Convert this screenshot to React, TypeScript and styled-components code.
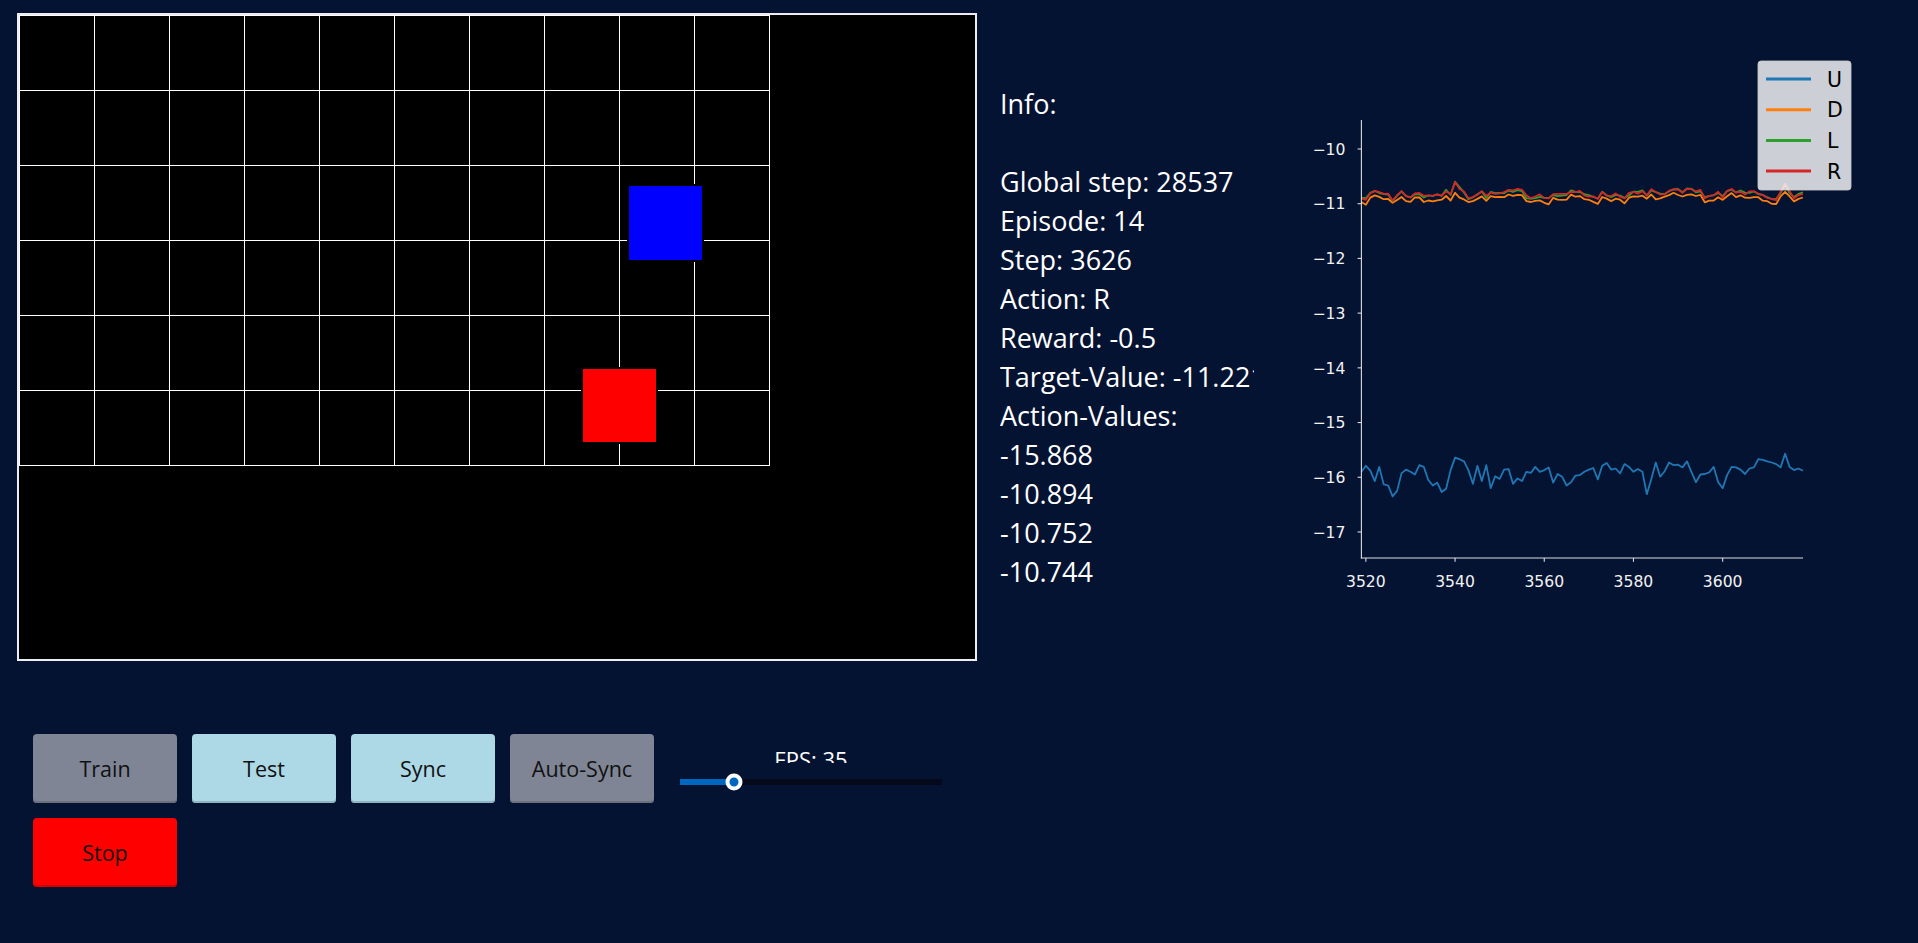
import React from 'react';
import styled, { createGlobalStyle } from 'styled-components';

const GlobalStyle = createGlobalStyle`
  html, body {
    margin: 0;
    padding: 0;
    background: #051332;
  }
  body {
    font-family: "Open Sans", "Noto Sans", sans-serif;
    color: #fff;
  }
`;

const Page = styled.div`
  min-height: 943px;
  padding: 13px 0 0 17px;
  box-sizing: border-box;
`;

const TopRow = styled.div`
  display: flex;
  align-items: flex-start;
`;

const BoardFrame = styled.div`
  flex-shrink: 0;
  width: 956px;
  height: 644px;
  border: 2px solid #eeeef2;
  background: #000;
  svg {
    display: block;
  }
`;

const InfoPanel = styled.div`
  flex-shrink: 0;
  width: 254px;
  margin: 71px 0 0 23px;
  overflow: hidden;
  white-space: pre;
  font-size: 27px;
  line-height: 39px;
`;

const InfoLine = styled.div`
  height: 39px;
`;

const ChartBox = styled.div`
  flex-shrink: 0;
  margin: 27px 0 0 6px;
  svg {
    display: block;
  }
`;

const Controls = styled.div`
  display: flex;
  flex-wrap: wrap;
  gap: 15px;
  width: 940px;
  margin: 73px 0 0 16px;
`;

const tones = {
  gray: { bg: '#7f8594', edge: '#6b707d' },
  blue: { bg: '#add8e6', edge: '#8fb3bf' },
  red: { bg: '#ff0000', edge: '#d40000' },
};

const Button = styled.button<{ $tone: keyof typeof tones }>`
  width: 144px;
  height: 69px;
  border: 0;
  border-radius: 4px;
  background: ${(p) => tones[p.$tone].bg};
  box-shadow: inset 0 -2px 0 ${(p) => tones[p.$tone].edge};
  color: #111;
  font-family: "Open Sans", "Noto Sans", sans-serif;
  font-size: 21.5px;
  padding: 0;
  cursor: pointer;
`;

const SliderBox = styled.div`
  width: 284px;
  padding: 0 11px;
  box-sizing: border-box;
  display: flex;
  flex-direction: column;
`;

const SliderLabel = styled.div`
  height: 14.5px;
  margin-top: 14.5px;
  overflow: hidden;
  text-align: center;
  font-size: 22px;
  line-height: 21px;
  color: #fff;
`;

const Track = styled.div`
  position: relative;
  height: 6px;
  margin-top: 16px;
  background: #040a1b;
`;

const Fill = styled.div`
  height: 100%;
  background: #0067c0;
`;

const Thumb = styled.div`
  position: absolute;
  top: 50%;
  width: 17px;
  height: 17px;
  box-sizing: border-box;
  border-radius: 50%;
  border: 4px solid #fff;
  background: #0067c0;
  transform: translate(-50%, -50%);
`;

const CELL = 75;

const Board = () => {
  const cols = 10;
  const rows = 6;
  const lines: React.ReactNode[] = [];
  for (let c = 0; c <= cols; c++) {
    lines.push(<line key={'v' + c} x1={c * CELL + 0.5} y1={0} x2={c * CELL + 0.5} y2={rows * CELL + 1} stroke="#fff" strokeWidth={1} />);
  }
  for (let r = 0; r <= rows; r++) {
    lines.push(<line key={'h' + r} x1={0} y1={r * CELL + 0.5} x2={cols * CELL + 1} y2={r * CELL + 0.5} stroke="#fff" strokeWidth={1} />);
  }
  const tile = (x: number, y: number, w: number, h: number, color: string) => (
    <g>
      <rect x={x - 2} y={y - 2} width={w + 4} height={h + 4} fill="#000" />
      <rect x={x} y={y} width={w} height={h} fill={color} />
    </g>
  );
  return (
    <BoardFrame>
      <svg width={956} height={644}>
        {lines}
        {tile(610, 171, 73, 74, '#0000ff')}
        {tile(564, 354, 73, 73, '#ff0000')}
      </svg>
    </BoardFrame>
  );
};

const infoLines = [
  'Info:',
  '',
  'Global step: 28537',
  'Episode: 14',
  'Step: 3626',
  'Action: R',
  'Reward: -0.5',
  'Target-Value: -11.221',
  'Action-Values:',
  '-15.868',
  '-10.894',
  '-10.752',
  '-10.744',
];

const upValues = [
  -15.9, -15.79, -15.88, -16.07, -15.81, -16.13, -16.15, -16.35, -16.25, -15.93,
  -15.86, -15.9, -15.95, -15.78, -15.81, -16.05, -16.15, -16.1, -16.27, -16.21,
  -15.87, -15.64, -15.67, -15.71, -15.87, -16.12, -15.79, -16.07, -15.78, -16.2,
  -15.98, -16.03, -15.86, -15.85, -16.12, -16.02, -16.07, -15.9, -15.92, -15.81,
  -15.9, -15.87, -15.82, -16.1, -15.94, -15.99, -16.15, -16.09, -15.97, -15.96,
  -15.9, -15.86, -15.83, -16.04, -15.79, -15.74, -15.86, -15.84, -15.93, -15.76,
  -15.81, -15.9, -15.85, -15.9, -16.31, -16.03, -15.73, -15.99, -15.89, -15.73,
  -15.78, -15.77, -15.82, -15.71, -15.9, -16.09, -15.95, -15.94, -15.91, -15.81,
  -16.09, -16.2, -15.96, -15.81, -15.82, -15.86, -15.94, -15.84, -15.82, -15.67,
  -15.68, -15.71, -15.73, -15.76, -15.82, -15.57, -15.81, -15.87, -15.84, -15.88,
];

function rng(seed: number) {
  let a = seed;
  return () => {
    a |= 0;
    a = (a + 0x6d2b79f5) | 0;
    let t = Math.imul(a ^ (a >>> 15), 1 | a);
    t = (t + Math.imul(t ^ (t >>> 7), 61 | t)) ^ t;
    return ((t ^ (t >>> 14)) >>> 0) / 4294967296;
  };
}

// a few visible bumps in the upper curves (index -> offset)
const bumps: Record<number, number> = { 7: -0.1, 21: 0.17, 22: 0.14, 23: 0.1, 64: -0.08, 66: 0.08, 81: -0.07, 95: 0.14 };

const makeSeries = () => {
  const r = rng(7);
  const base: number[] = [];
  let prev = 0;
  for (let i = 0; i < 100; i++) {
    prev = prev * 0.35 + (r() - 0.5) * 0.15;
    base.push(-10.83 + prev + (bumps[i] || 0));
  }
  const L = base.map((b) => b + (r() - 0.5) * 0.05);
  const R = base.map((b) => b + (r() - 0.5) * 0.05 + 0.005);
  const D = base.map((b, i) => b - 0.08 - (bumps[i] || 0) * 0.6 + (r() - 0.5) * 0.04);
  return { D, L, R };
};

const series = makeSeries();

// chart geometry, in svg pixels
const AX_X = 101.4;
const AX_RIGHT = 543;
const AX_TOP = 80;
const AX_BOTTOM = 518;
const STEP_PX = 4.46;

const xOfStep = (s: number) => AX_X + (s - 3519) * STEP_PX;
const yOf = (v: number) => 109 + (-10 - v) * 54.71;
const pathOf = (vals: number[]) =>
  vals.map((v, i) => `${i ? 'L' : 'M'}${xOfStep(3519 + i).toFixed(1)},${yOf(v).toFixed(1)}`).join(' ');

const AXIS = '#dcdce0';
const TICK_TEXT = '#f2f2f2';

const Chart = () => {
  const yTicks = [-10, -11, -12, -13, -14, -15, -16, -17];
  const xTicks = [3520, 3540, 3560, 3580, 3600];
  const legend = [
    { label: 'U', color: '#1f77b4' },
    { label: 'D', color: '#ff7f0e' },
    { label: 'L', color: '#2ca02c' },
    { label: 'R', color: '#d62728' },
  ];
  return (
    <ChartBox>
      <svg width={620} height={580} fontFamily='"DejaVu Sans", sans-serif'>
        <path d={pathOf(upValues)} fill="none" stroke="#1f77b4" strokeWidth={1.8} strokeLinejoin="round" />
        <path d={pathOf(series.D)} fill="none" stroke="#ff7f0e" strokeWidth={1.8} strokeLinejoin="round" />
        <path d={pathOf(series.L)} fill="none" stroke="#2ca02c" strokeWidth={1.8} strokeLinejoin="round" />
        <path d={pathOf(series.R)} fill="none" stroke="#d62728" strokeWidth={1.8} strokeLinejoin="round" />
        <line x1={AX_X} y1={AX_TOP} x2={AX_X} y2={AX_BOTTOM + 0.5} stroke={AXIS} strokeWidth={1.1} />
        <line x1={AX_X - 0.5} y1={AX_BOTTOM} x2={AX_RIGHT} y2={AX_BOTTOM} stroke={AXIS} strokeWidth={1.1} />
        {yTicks.map((v) => (
          <g key={v}>
            <line x1={AX_X - 3.8} y1={yOf(v)} x2={AX_X} y2={yOf(v)} stroke={AXIS} strokeWidth={1.1} />
            <text x={AX_X - 16} y={yOf(v) + 5.7} fontSize={15.6} fill={TICK_TEXT} textAnchor="end">
              {'\u2212' + Math.abs(v)}
            </text>
          </g>
        ))}
        {xTicks.map((s) => {
          const x = xOfStep(s);
          return (
            <g key={s}>
              <line x1={x} y1={AX_BOTTOM} x2={x} y2={AX_BOTTOM + 3.8} stroke={AXIS} strokeWidth={1.1} />
              <text x={x} y={547.4} fontSize={15.6} fill={TICK_TEXT} textAnchor="middle">
                {s}
              </text>
            </g>
          );
        })}
        <rect x={498} y={21} width={93} height={129} rx={3} fill="rgba(255,255,255,0.8)" stroke="rgba(204,204,204,0.8)" />
        {legend.map((item, i) => {
          const y = 39 + i * 30.7;
          return (
            <g key={item.label}>
              <line x1={506} y1={y} x2={551} y2={y} stroke={item.color} strokeWidth={3} />
              <text x={567} y={y + 7.5} fontSize={20.5} fill="#000">
                {item.label}
              </text>
            </g>
          );
        })}
      </svg>
    </ChartBox>
  );
};

const FpsSlider = ({ value, min, max }: { value: number; min: number; max: number }) => {
  const pct = ((value - min) / (max - min)) * 100;
  return (
    <SliderBox>
      <SliderLabel>FPS: {value}</SliderLabel>
      <Track>
        <Fill style={{ width: pct + '%' }} />
        <Thumb style={{ left: pct + '%' }} />
      </Track>
    </SliderBox>
  );
};

const App = () => (
  <>
    <GlobalStyle />
    <Page>
      <TopRow>
        <Board />
        <InfoPanel>
          {infoLines.map((t, i) => (
            <InfoLine key={i}>{t}</InfoLine>
          ))}
        </InfoPanel>
        <Chart />
      </TopRow>
      <Controls>
        <Button $tone="gray">Train</Button>
        <Button $tone="blue">Test</Button>
        <Button $tone="blue">Sync</Button>
        <Button $tone="gray">Auto-Sync</Button>
        <FpsSlider value={35} min={0} max={170} />
        <Button $tone="red">Stop</Button>
      </Controls>
    </Page>
  </>
);

export default App;
